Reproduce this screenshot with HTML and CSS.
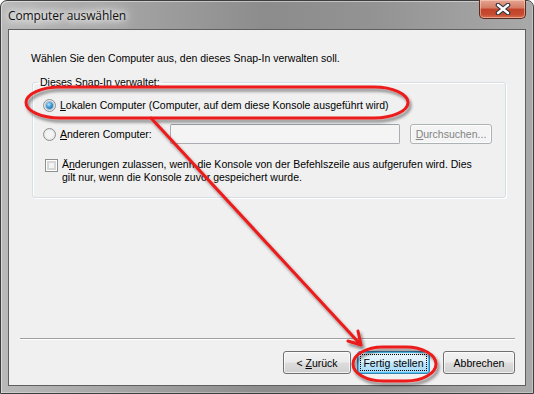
FILE: index.html
```html
<!DOCTYPE html>
<html lang="de">
  <head>
    <meta charset="UTF-8" />
    <title>Computer auswählen</title>
    <link rel="stylesheet" href="styles.css">
  </head>
  <body>
    <div class="window">
      <!-- TITLE BAR -->
      <div class="titlebar">
        <span class="title">Computer auswählen</span>
        <div class="close-btn">
          <svg width="16" height="12" viewBox="0 0 16 12">
            <path d="M3 2 L13 10 M13 2 L3 10" stroke="#2b3340" stroke-width="4.6" stroke-linecap="round"/>
            <path d="M3 2 L13 10 M13 2 L3 10" stroke="#ffffff" stroke-width="2.4" stroke-linecap="round"/>
          </svg>
        </div>
      </div>

      <!-- CLIENT AREA -->
      <div class="client">
        <p class="intro">Wählen Sie den Computer aus, den dieses Snap-In verwalten soll.</p>

        <fieldset class="group">
          <legend>Dieses Snap-In verwaltet:</legend>
          <div class="row row-local">
            <span class="radio on"><span class="dot"></span></span>
            <span class="label"><u>L</u>okalen Computer (Computer, auf dem diese Konsole ausgeführt wird)</span>
          </div>
          <div class="row row-other">
            <span class="radio"></span>
            <span class="label label-other"><u>A</u>nderen Computer:</span>
            <span class="textbox"></span>
            <span class="btn btn-disabled"><span><u>D</u>urchsuchen...</span></span>
          </div>
          <div class="row row-check">
            <span class="check"></span>
            <span class="label">Ä<u>n</u>derungen zulassen, wenn die Konsole von der Befehlszeile aus aufgerufen wird. Dies<br>gilt nur, wenn die Konsole zuvor gespeichert wurde.</span>
          </div>
        </fieldset>

        <div class="footer">
          <div class="separator"></div>
          <div class="buttons">
            <span class="btn btn-back"><span>&lt; <u>Z</u>urück</span></span>
            <span class="btn btn-default"><span class="focus">Fertig stellen</span></span>
            <span class="btn btn-cancel"><span>Abbrechen</span></span>
          </div>
        </div>
      </div>

      <!-- RED ANNOTATIONS -->
      <svg class="marks" width="534" height="394" viewBox="0 0 534 394">
        <defs>
          <filter id="shadow" x="-10%" y="-20%" width="130%" height="150%">
            <feDropShadow dx="2" dy="3" stdDeviation="1.4" flood-color="#000" flood-opacity="0.45"/>
          </filter>
        </defs>
        <g fill="none" stroke="#ec1b1b" stroke-width="3" stroke-linecap="round" stroke-linejoin="round" filter="url(#shadow)">
          <rect x="26" y="87" width="382" height="31" rx="34" ry="15.5"/>
          <path d="M151 118 L361 345 M358 331 L361 345 L348 341"/>
          <rect x="353" y="347" width="83" height="34" rx="30" ry="17"/>
        </g>
      </svg>
    </div>
  </body>
</html>
```

FILE: styles.css
```css
/* Global */
* {
  box-sizing: border-box;
}
body {
  margin: 0;
  background: #ffffff;
  font-family: "Liberation Sans", Arial, sans-serif;
  font-size: 10.5px;
  color: #000;
}
u {
  text-decoration: underline;
  text-underline-offset: 1px;
}

/* WINDOW FRAME */
.window {
  position: relative;
  width: 534px;
  height: 394px;
  display: flex;
  flex-direction: column;
  padding: 0 7px 7px 7px;
  border: 1px solid #3e3e3e;
  border-radius: 7px 7px 0 0;
  background: linear-gradient(to right, #b9b9b9 0%, #a2a2a2 25%, #8c8c8c 50%, #939393 70%, #a9a9a9 100%);
  box-shadow: inset 1px 1px 0 rgba(255, 255, 255, 0.45), inset -1px -1px 0 rgba(255, 255, 255, 0.3);
}

/* TITLE BAR */
.titlebar {
  height: 28px;
  display: flex;
  align-items: flex-start;
  justify-content: space-between;
}
.title {
  margin-top: 6px;
  font-family: "Open Sans", "Liberation Sans", sans-serif;
  font-size: 12px;
  letter-spacing: -0.1px;
  color: #111;
  text-shadow: 0 0 6px #fff, 0 0 10px #fff, 0 0 14px rgba(255, 255, 255, 0.9), 0 0 18px rgba(255, 255, 255, 0.8);
}
.close-btn {
  width: 47px;
  height: 19px;
  margin-top: -1px;
  display: flex;
  align-items: center;
  justify-content: center;
  border: 1px solid #5a2a22;
  border-top: none;
  border-radius: 0 0 5px 5px;
  background: linear-gradient(#e5a593 0%, #d47b63 45%, #c1432a 50%, #c64b30 80%, #d8704f 100%);
  box-shadow: inset 0 0 0 1px rgba(255, 220, 200, 0.5);
}

/* CLIENT AREA */
.client {
  flex: 1;
  display: flex;
  flex-direction: column;
  background: #f0f0f0;
  border: 1px solid #5f5f5f;
}
.intro {
  margin: 22px 0 0 22px;
  line-height: 13px;
}

/* GROUP BOX */
.group {
  margin: 11px 0 0 23px;
  width: 474px;
  padding: 0 0 13px 0;
  border: 1px solid #d5dfe5;
  border-radius: 3px;
  box-shadow: inset 1px 1px 0 #fff, 1px 1px 0 #fff;
  min-width: 0;
}
.group legend {
  margin-left: 5px;
  padding: 0 2px;
  line-height: 13px;
}
.row {
  display: flex;
  align-items: center;
  line-height: 13px;
}
.row-local {
  margin: 10px 0 0 10px;
}
.row-other {
  margin: 12px 0 0 10px;
}
.row-check {
  margin: 14px 0 0 12px;
  align-items: flex-start;
}
.label {
  margin-left: 4px;
}
.label-other {
  width: 110px;
}

/* RADIO + CHECKBOX */
.radio {
  width: 13px;
  height: 13px;
  border-radius: 50%;
  border: 1px solid #8e8f8f;
  background: radial-gradient(circle at 50% 50%, #f4f4f4 40%, #d8d8d8 100%);
  display: flex;
  align-items: center;
  justify-content: center;
  flex-shrink: 0;
}
.dot {
  width: 7px;
  height: 7px;
  border-radius: 50%;
  background: radial-gradient(circle at 40% 35%, #b6e4fb 0%, #3d9ad6 45%, #15588f 100%);
  box-shadow: 0 0 0 1px rgba(40, 90, 140, 0.35);
}
.check {
  width: 13px;
  height: 13px;
  margin-top: 1px;
  border: 1px solid #8e8f8f;
  background: #f4f4f4;
  box-shadow: inset 0 0 0 1px #fff, inset 0 0 0 3px #d6d6d6;
  flex-shrink: 0;
}

/* TEXT BOX + BUTTONS */
.textbox {
  width: 230px;
  height: 20px;
  border: 1px solid #abadb3;
  border-top-color: #9aa0a8;
  background: #f4f4f4;
  border-radius: 2px;
}
.btn {
  display: flex;
  align-items: center;
  justify-content: center;
  height: 23px;
  border: 1px solid #707070;
  border-radius: 3px;
  background: linear-gradient(#f2f2f2 0%, #ebebeb 48%, #dddddd 52%, #cfcfcf 100%);
  box-shadow: inset 0 0 0 1px rgba(255, 255, 255, 0.7);
  white-space: nowrap;
}
.btn-disabled {
  width: 82px;
  height: 20px;
  margin-left: 10px;
  color: #838383;
  border-color: #adb2b5;
  background: #f4f4f4;
}

/* FOOTER */
.footer {
  margin-top: auto;
}
.separator {
  margin: 0 10px 0 11px;
  height: 2px;
  border-top: 1px solid #a0a0a0;
  border-bottom: 1px solid #ffffff;
}
.buttons {
  display: flex;
  justify-content: flex-end;
  margin: 11px 10px 11px 0;
}
.btn-back {
  width: 68px;
}
.btn-default {
  width: 73px;
  margin-left: 6px;
  border-color: #3c7fb1;
  background: linear-gradient(#eaf6fd 0%, #d9f0fc 48%, #bee6fd 52%, #a7d9f5 100%);
  box-shadow: inset 0 0 0 1px #50c8f5;
  padding: 2px;
}
.focus {
  flex: 1;
  align-self: stretch;
  display: flex;
  align-items: center;
  justify-content: center;
  border: 1px dotted #000;
}
.btn-cancel {
  width: 72px;
  margin-left: 13px;
}

/* ANNOTATIONS */
.marks {
  position: absolute;
  top: -1px;
  left: -1px;
  pointer-events: none;
}
```
